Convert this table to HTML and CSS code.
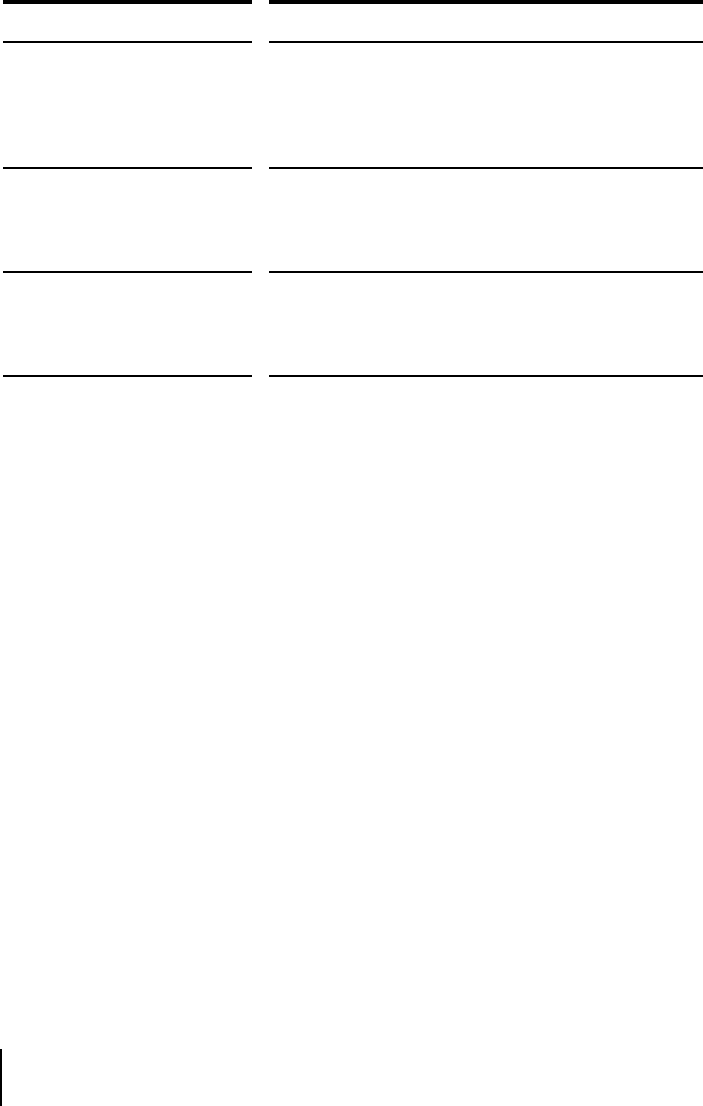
FILE: index.html
```html
<!DOCTYPE html>
<html lang="en">
<head>
  <meta charset="UTF-8" />
  <meta name="viewport" content="width=device-width, initial-scale=1.0"/>
  <title>Table</title>
  <link rel="stylesheet" href="styles.css">
</head>
<body>
  <main class="sheet">
    <!-- two ruled columns -->
    <div class="spec">
      <div class="cell head"></div>
      <div class="cell head"></div>

      <div class="cell tall"></div>
      <div class="cell tall"></div>

      <div class="cell"></div>
      <div class="cell"></div>

      <div class="cell last"></div>
      <div class="cell last"></div>
    </div>
  </main>

  <div class="change-bar"></div>
</body>
</html>
```

FILE: styles.css
```css
:root {
  --ink: #000;
  --paper: #fff;
}

html, body {
  height: 100%;
}

body {
  margin: 0;
  background: var(--paper);
  font-family: "Liberation Serif", serif;
  display: flex;
  flex-direction: column;
}

.sheet {
  padding-left: 3px;
}

.spec {
  display: grid;
  grid-template-columns: 249px 434px;
  column-gap: 17px;
}

.cell {
  border-top: 2px solid var(--ink);
  height: 102px;
}

.cell.head {
  border-top: 4px solid var(--ink);
  height: 37px;
}

.cell.tall {
  height: 124px;
}

.cell.last {
  border-bottom: 2px solid var(--ink);
}

.change-bar {
  margin-top: auto;
  width: 2px;
  height: 57px;
  background: var(--ink);
}
```
